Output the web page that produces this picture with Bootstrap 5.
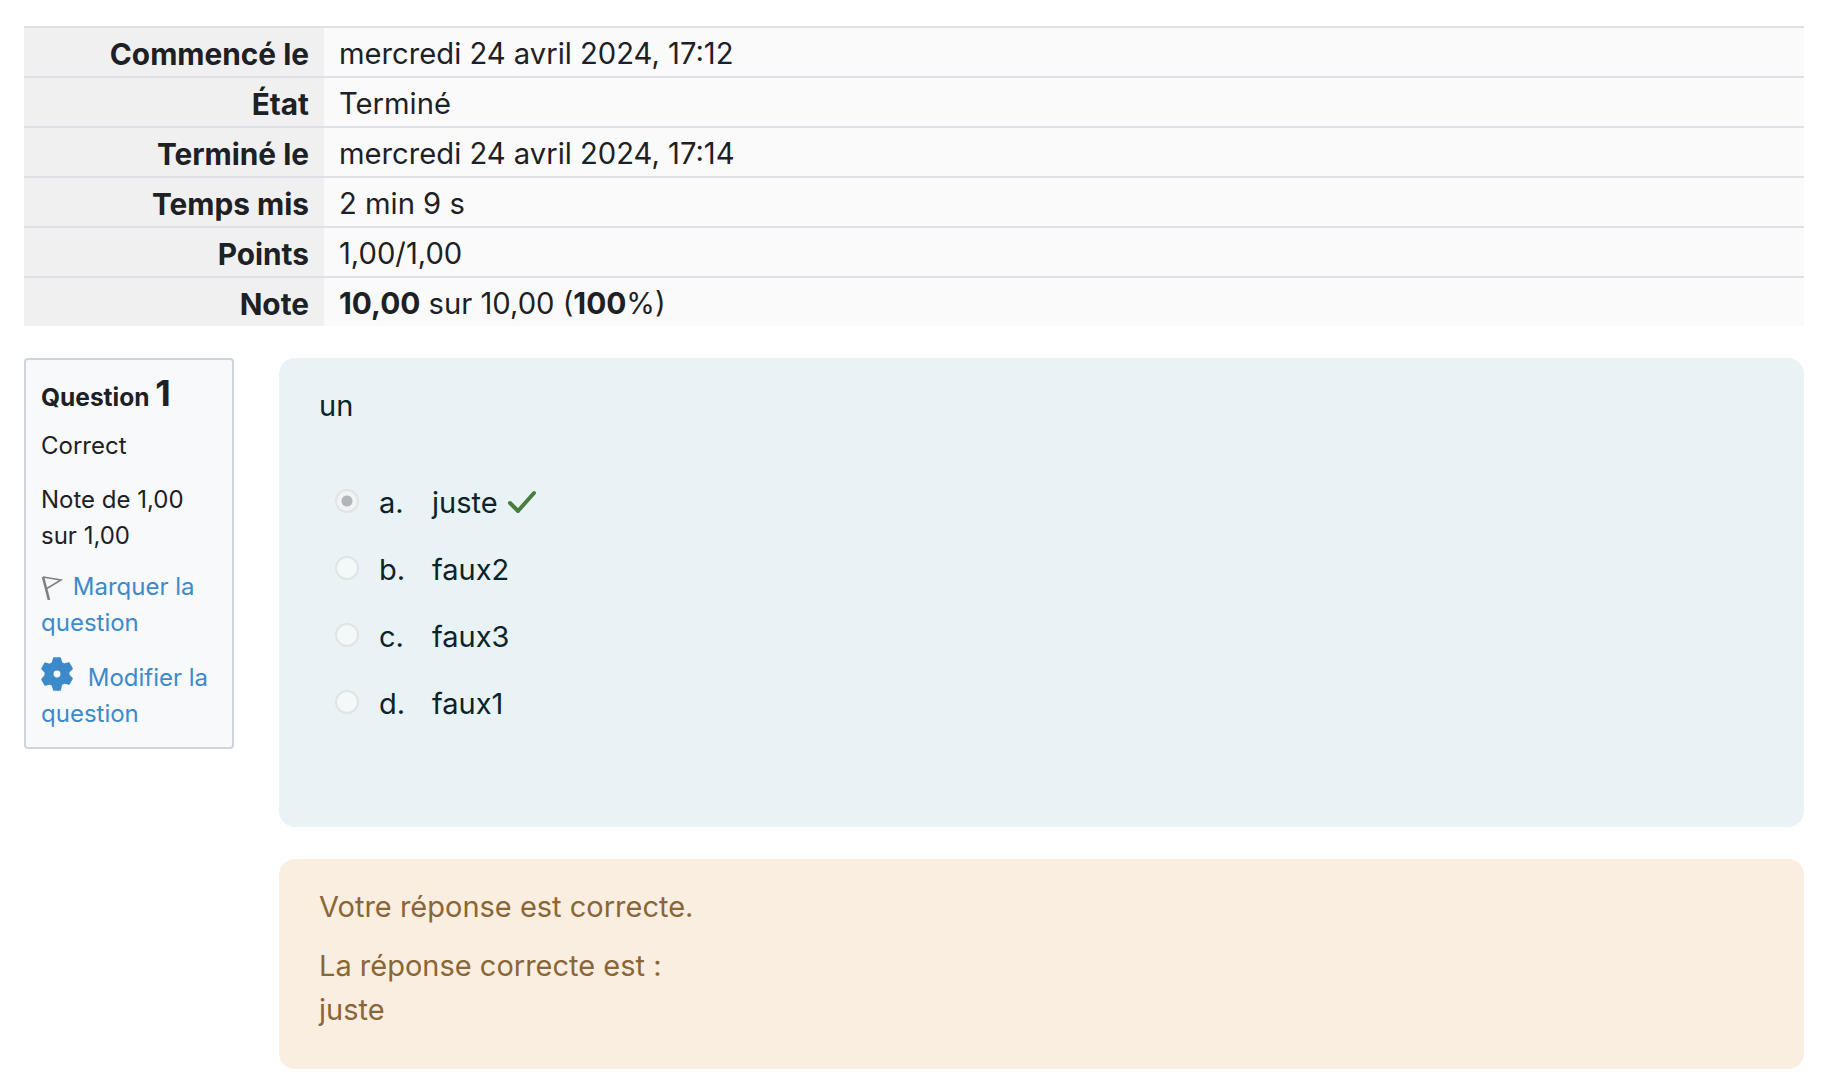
<!DOCTYPE html>
<html lang="fr">
  <head>
    <meta charset="UTF-8" />
    <meta name="viewport" content="width=device-width, initial-scale=1.0" />
    <title>Relecture de test</title>
    <link
      href="https://cdn.jsdelivr.net/npm/bootstrap@5.3.0/dist/css/bootstrap.min.css"
      rel="stylesheet"
    />
    <style>
      body {
        font-family: Inter, "Liberation Sans", sans-serif;
        font-size: 29px;
        color: #1d2125;
        background-color: #fff;
      }
      .page-wrap {
        padding: 26px 28px 21px 24px;
      }
      .summary-table {
        margin-bottom: 32px;
        border-top: 2px solid #dee2e6;
      }
      .summary-table th,
      .summary-table td {
        padding: 4px 15px 0;
        line-height: 44px;
        font-size: 29.2px;
        color: #1d2125;
        border-bottom: 2px solid #dee2e6;
        box-shadow: none;
      }
      .summary-table tr:last-child th,
      .summary-table tr:last-child td {
        border-bottom: 0;
      }
      .summary-table th {
        width: 300px;
        text-align: right;
        font-size: 29.8px;
        font-weight: 700;
        background-color: #f0f0f0;
      }
      .summary-table td {
        background-color: #fafafa;
      }
      .summary-table b {
        font-size: 29.8px;
        line-height: 1;
      }
      .question-info {
        width: 210px;
        height: 391px;
        flex-shrink: 0;
        margin-right: 45px;
        padding: 15px 15px 11px;
        font-size: 24px;
        line-height: 36px;
        background-color: #f8f9fa;
        border: 2px solid #ced4da;
        border-radius: 4px;
      }
      .question-title {
        font-size: 24.5px;
        font-weight: 700;
        line-height: 36px;
        margin-bottom: 13px;
      }
      .question-number {
        font-size: 36px;
      }
      .info-line {
        margin-bottom: 15px;
      }
      .info-line.is-state {
        margin-bottom: 18px;
      }
      .info-line.is-flag {
        margin-bottom: 16px;
      }
      .info-link {
        color: #3d8acb;
        text-decoration: none;
      }
      .flag-icon {
        width: 22px;
        height: 26px;
        margin-right: 3px;
        vertical-align: -6px;
      }
      .gear-icon {
        width: 34px;
        height: 34px;
        margin-left: -1px;
        margin-right: 7px;
        vertical-align: -5px;
      }
      .question-box {
        height: 469px;
        padding: 27px 40px 26px;
        margin-bottom: 32px;
        color: #0c2329;
        background-color: #e9f2f5;
        border-radius: 16px;
      }
      .question-text {
        line-height: 42px;
        margin-bottom: 41px;
      }
      .answer-row {
        height: 67px;
        padding-left: 16px;
        line-height: 42px;
      }
      .answer-radio {
        width: 24px;
        height: 24px;
        margin-right: 20px;
        margin-bottom: 2px;
        border: 2px solid #dfe4e6;
        border-radius: 50%;
        background-color: #f3f8f9;
      }
      .answer-radio.is-picked {
        background: radial-gradient(circle, #b3b6b8 0 5px, #f1f3f4 6px);
      }
      .answer-letter {
        width: 53px;
        padding-top: 3px;
      }
      .answer-text {
        padding-top: 3px;
      }
      .check-icon {
        width: 30px;
        height: 26px;
        margin-left: 9px;
      }
      .feedback-box {
        height: 210px;
        padding: 26px 40px;
        color: #8a6636;
        background-color: #faeee0;
        border-radius: 16px;
      }
      .feedback-box p {
        margin-bottom: 15px;
        line-height: 44px;
      }
      .feedback-answer {
        line-height: 44px;
      }
    </style>
  </head>
  <body>
    <div class="page-wrap">
      <table class="table table-borderless summary-table">
        <tbody>
          <tr>
            <th>Commencé le</th>
            <td>mercredi 24 avril 2024, 17:12</td>
          </tr>
          <tr>
            <th>État</th>
            <td>Terminé</td>
          </tr>
          <tr>
            <th>Terminé le</th>
            <td>mercredi 24 avril 2024, 17:14</td>
          </tr>
          <tr>
            <th>Temps mis</th>
            <td>2 min 9 s</td>
          </tr>
          <tr>
            <th>Points</th>
            <td>1,00/1,00</td>
          </tr>
          <tr>
            <th>Note</th>
            <td><b>10,00</b> sur 10,00 (<b>100</b>%)</td>
          </tr>
        </tbody>
      </table>

      <div class="d-flex align-items-start">
        <div class="question-info">
          <div class="question-title">
            Question <span class="question-number">1</span>
          </div>
          <div class="info-line is-state">Correct</div>
          <div class="info-line">Note de 1,00 sur 1,00</div>
          <div class="info-line is-flag">
            <svg class="flag-icon" viewBox="0 0 22 26" fill="none" stroke="#808080" stroke-width="2">
              <path stroke-width="2.6" d="M2 2 8 25" />
              <path stroke-width="1.6" d="M2 2 20 5 5 14" />
            </svg>
            <a href="#" class="info-link">Marquer la question</a>
          </div>
          <div>
            <svg class="gear-icon" viewBox="0 0 32 32" fill="#3d8acb" stroke="#3d8acb" stroke-width="1.5" stroke-linejoin="round">
              <path
                fill-rule="evenodd"
                d="M13 1h6l1.2 4.4 2.6 1.5 4.4-1.2 3 5.2-3.2 3.2v3l3.2 3.2-3 5.2-4.4-1.2-2.6 1.500L19 31h-6l-1.2-4.400-2.600-1.500-4.400 1.200-3-5.200L5 17.400v-3L1.800 11.100l3-5.200 4.400 1.200 2.600-1.500zM16 12a4 4 0 1 0 0 8 4 4 0 0 0 0-8z"
              />
            </svg>
            <a href="#" class="info-link">Modifier la question</a>
          </div>
        </div>

        <div class="flex-grow-1">
          <div class="question-box">
            <div class="question-text">un</div>
            <div class="answer-row d-flex align-items-center">
              <span class="answer-radio is-picked"></span>
              <span class="answer-letter">a.</span>
              <span class="answer-text">juste</span>
              <svg class="check-icon" viewBox="0 0 30 26" fill="none" stroke="#4a7c3f" stroke-width="4" stroke-linecap="round" stroke-linejoin="round">
                <path d="M3 14 11 22 27 4" />
              </svg>
            </div>
            <div class="answer-row d-flex align-items-center">
              <span class="answer-radio"></span>
              <span class="answer-letter">b.</span>
              <span class="answer-text">faux2</span>
            </div>
            <div class="answer-row d-flex align-items-center">
              <span class="answer-radio"></span>
              <span class="answer-letter">c.</span>
              <span class="answer-text">faux3</span>
            </div>
            <div class="answer-row d-flex align-items-center">
              <span class="answer-radio"></span>
              <span class="answer-letter">d.</span>
              <span class="answer-text">faux1</span>
            </div>
          </div>

          <div class="feedback-box">
            <p>Votre réponse est correcte.</p>
            <div class="feedback-answer">La réponse correcte est :<br />juste</div>
          </div>
        </div>
      </div>
    </div>
    <script src="https://cdn.jsdelivr.net/npm/bootstrap@5.3.0/dist/js/bootstrap.bundle.min.js"></script>
  </body>
</html>
